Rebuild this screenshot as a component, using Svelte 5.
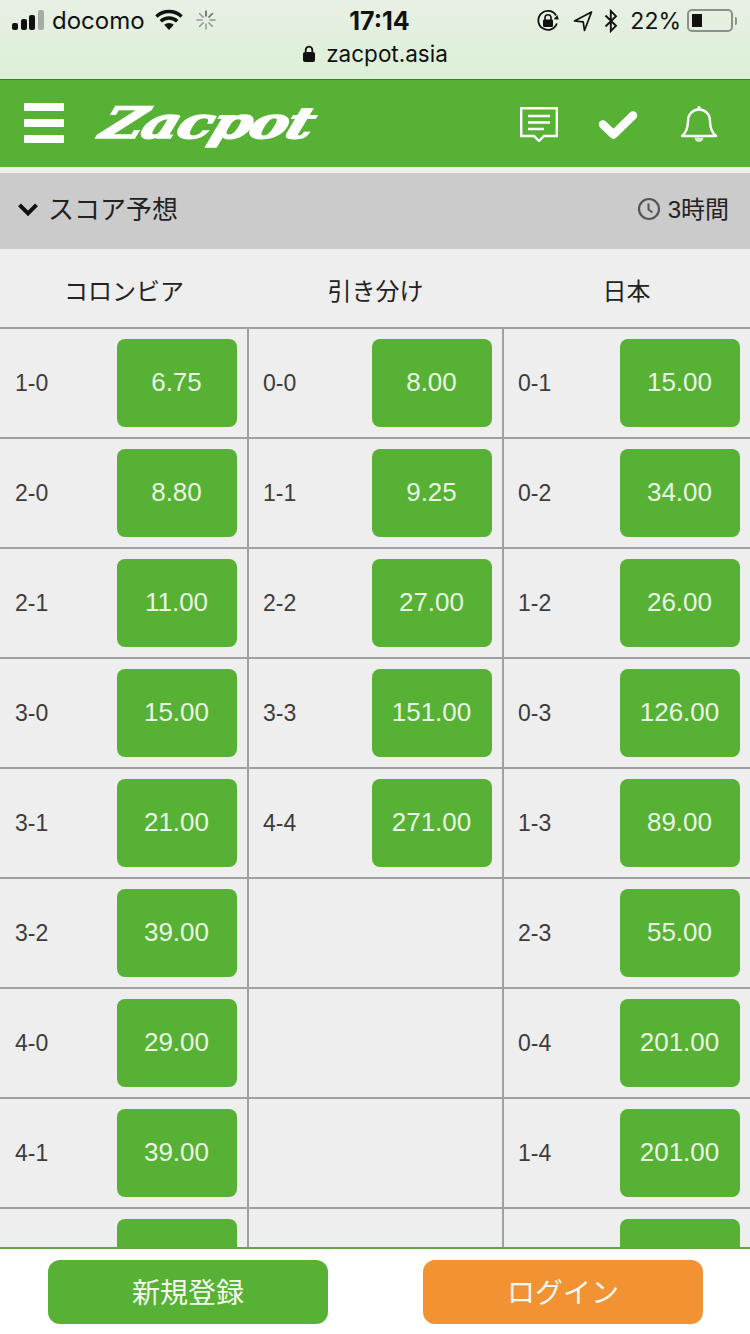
<script>
  const rows = [
    [['1-0','6.75'],['0-0','8.00'],['0-1','15.00']],
    [['2-0','8.80'],['1-1','9.25'],['0-2','34.00']],
    [['2-1','11.00'],['2-2','27.00'],['1-2','26.00']],
    [['3-0','15.00'],['3-3','151.00'],['0-3','126.00']],
    [['3-1','21.00'],['4-4','271.00'],['1-3','89.00']],
    [['3-2','39.00'],null,['2-3','55.00']],
    [['4-0','29.00'],null,['0-4','201.00']],
    [['4-1','39.00'],null,['1-4','201.00']],
    [['','' ],null,['','']]
  ];
</script>

<div class="page">
  <div class="browser">
    <div class="status">
      <div class="st-left">
        <span class="signal"><i class="b1"></i><i class="b2"></i><i class="b3"></i><i class="b4"></i></span>
        <span class="carrier">docomo</span>
        <svg class="wifi" width="30" height="22" viewBox="0 0 30 22"><path d="M15 21 L10.2 15.8 A7 7 0 0 1 19.8 15.8 Z" fill="#111"/><path d="M6.8 12.2 A12 12 0 0 1 23.2 12.2" fill="none" stroke="#111" stroke-width="3.4"/><path d="M2.4 7.4 A18.500 18.500 0 0 1 27.600 7.400" fill="none" stroke="#111" stroke-width="3.4"/></svg>
        <svg class="spin" width="20" height="20" viewBox="0 0 20 20" stroke-width="1.500" stroke-linecap="round"><g stroke="#555"><path d="M10 1v5"/><path d="M16.400 3.600l-3.500 3.500" opacity=".8"/><path d="M19 10h-5" opacity=".6"/></g><g stroke="#999"><path d="M16.400 16.400l-3.500-3.500"/><path d="M10 19v-5"/><path d="M3.600 16.400l3.500-3.500"/><path d="M1 10h5"/><path d="M3.600 3.600l3.500 3.500"/></g></svg>
      </div>
      <div class="time">17:14</div>
      <div class="st-right">
        <svg width="24" height="24" viewBox="0 0 24 24"><path d="M20.800 14.500A9.500 9.500 0 1 1 20 6.500" fill="none" stroke="#111" stroke-width="1.800"/><path d="M22.800 10.500l-5.200-.2 3.800-4.200z" fill="#111"/><rect x="7" y="10.500" width="10" height="7.500" rx="1.200" fill="#111"/><path d="M9 11V8.800a3 3 0 0 1 6 0V11" fill="none" stroke="#111" stroke-width="1.600"/></svg>
        <svg class="loc" width="20" height="22" viewBox="0 0 20 22"><path d="M18.500 2 L1.500 11 L10.200 11.800 L11.500 20.500 Z" fill="none" stroke="#111" stroke-width="1.700" stroke-linejoin="round"/></svg>
        <svg class="bt" width="16" height="24" viewBox="0 0 14 24"><path d="M1.500 6.500 L12 16.800 L6.800 22 V2 L12 7.200 L1.500 17.500" fill="none" stroke="#111" stroke-width="1.900"/></svg>
        <span class="pct">22%</span>
        <span class="battery"><span class="fill"></span></span>
        <span class="nub"></span>
      </div>
    </div>
    <div class="url">
      <svg width="14" height="18" viewBox="0 0 14 18"><rect x="1" y="7" width="12" height="10" rx="2" fill="#111"/><path d="M3.700 8V5a3.300 3.300 0 0 1 6.600 0v3" fill="none" stroke="#111" stroke-width="1.800"/></svg>
      <span>zacpot.asia</span>
    </div>
  </div>

  <header class="nav">
    <div class="burger"><i></i><i></i><i></i></div>
    <div class="logo">Zacpot</div>
    <div class="nav-icons">
      <svg width="38" height="35" viewBox="0 0 38 35"><path d="M1.200 1.200H36.800V29H24L19 34L14 29H1.200Z" fill="none" stroke="#fff" stroke-width="2.400"/><path d="M8 9H30M8 15.500H30M8 22H24" stroke="#fff" stroke-width="2.400" fill="none"/></svg>
      <svg width="40" height="30" viewBox="0 0 40 30"><path d="M5 14.500 L15.500 24.500 L35 5.500" fill="none" stroke="#fff" stroke-width="8.500" stroke-linecap="round" stroke-linejoin="round"/></svg>
      <svg width="38" height="39" viewBox="0 0 38 39"><path d="M2 31 C7 27 8 22 8 16 C8 9 13 4.500 19 4.500 C25 4.500 30 9 30 16 C30 22 31 27 36 31 Z" fill="none" stroke="#fff" stroke-width="2.400" stroke-linejoin="round"/><circle cx="19" cy="2.800" r="1.800" fill="#fff"/><path d="M14.500 32.500a4.500 4.500 0 0 0 9 0z" fill="#d8e9d2"/></svg>
    </div>
  </header>

  <div class="section">
    <div class="sec-title">
      <svg width="22" height="15" viewBox="0 0 22 15"><path d="M2.500 2.800 L11 11.300 L19.500 2.800" fill="none" stroke="#111" stroke-width="4"/></svg>
      <span>スコア予想</span>
    </div>
    <div class="sec-time">
      <svg width="24" height="24" viewBox="0 0 24 24"><circle cx="12" cy="12" r="10" fill="none" stroke="#555" stroke-width="2.200"/><path d="M11.500 6.500V12.500L15.500 15.500" fill="none" stroke="#555" stroke-width="2"/></svg>
      <span>3時間</span>
    </div>
  </div>

  <div class="teams">
    <div>コロンビア</div>
    <div>引き分け</div>
    <div>日本</div>
  </div>

  <div class="table">
    {#each rows as row}
      <div class="row">
        {#each row as cell, i}
          <div class="cell c{i}">
            {#if cell}
              <span class="score">{cell[0]}</span>
              <span class="odds">{cell[1]}</span>
            {/if}
          </div>
        {/each}
      </div>
    {/each}
  </div>

  <footer class="foot">
    <div class="btn green">新規登録</div>
    <div class="btn orange">ログイン</div>
  </footer>
</div>

<style>
  :global(body) { margin: 0; }
  .page {
    width: 750px; height: 1334px; display: flex; flex-direction: column; overflow: hidden;
    background: #eeeeee; color: #333;
    font-family: "Liberation Sans", Arial, "Noto Sans CJK JP", sans-serif;
  }
  .browser { height: 79px; flex: none; background: linear-gradient(#e8efe4, #dcf0d6); color: #111; }
  .status { height: 40px; display: grid; grid-template-columns: 1fr auto 1fr; align-items: center; padding: 1px 0 0 12px; box-sizing: border-box; }
  .st-left { display: flex; align-items: center; }
  .signal { display: flex; align-items: flex-end; gap: 2.500px; height: 20px; width: 33px; margin-top: -2px; }
  .signal i { width: 6px; background: #111; border-radius: 2px; }
  .signal .b1 { height: 7px; } .signal .b2 { height: 11px; } .signal .b3 { height: 15px; }
  .signal .b4 { height: 20px; background: #a8aca6; }
  .carrier { font-size: 24px; margin-left: 7px; font-family: Inter, "Liberation Sans", sans-serif; font-weight: 400; margin-top: -1px; }
  .wifi { margin-left: 9px; margin-top: -2px; }
  .spin { margin-left: 12px; margin-top: -2px; }
  .time { font-size: 25px; font-weight: 700; font-family: Inter, "Liberation Sans", sans-serif; margin-left: -3px; }
  .st-right { display: flex; align-items: center; justify-content: flex-end; padding-right: 13px; }
  .loc { margin-left: 13px; }
  .bt { margin-left: 10px; }
  .pct { font-size: 23px; margin-left: 11px; font-family: Inter, "Liberation Sans", sans-serif; }
  .battery { border: 2px solid #8c908a; border-radius: 5px; margin-left: 6px; padding: 3px; box-sizing: content-box; height: 13px; width: 36px; display: flex; }
  .battery .fill { width: 10px; background: #111; }
  .nub { width: 2px; height: 8px; background: #8c908a; margin-left: 2px; border-radius: 0 2px 2px 0; }
  .url { height: 39px; display: flex; align-items: center; justify-content: center; gap: 10px; font-size: 22.500px; font-family: Inter, "Liberation Sans", sans-serif; padding-bottom: 12px; box-sizing: border-box; }

  .nav { height: 88px; flex: none; box-sizing: border-box; border-top: 1px solid #3f7d2b; background: #56b135; display: flex; align-items: center; padding: 0 24px; }
  .burger { width: 40px; display: flex; flex-direction: column; gap: 8px; margin-top: -2px; }
  .burger i { height: 8px; background: #fff; display: block; border-radius: 1px; }
  .logo { margin-left: 39px; margin-top: 0; color: #fff; font-family: "DejaVu Serif", serif; font-weight: 700; font-style: italic; font-size: 43px; line-height: 1; letter-spacing: -1.500px; -webkit-text-stroke: 1.600px #fff; transform: scaleX(1.35) skewX(-14deg); transform-origin: left center; }
  .nav-icons { margin-left: auto; margin-right: 8px; margin-top: 2px; display: flex; align-items: center; gap: 40px; }
  .nav-icons svg:nth-child(2) { margin-right: 2px; }

  .section { height: 76px; flex: none; box-sizing: border-box; margin-top: 6px; background: #cbcbcb; display: flex; align-items: center; justify-content: space-between; padding: 0 21px 7px 17px; color: #222; }
  .sec-title { display: flex; align-items: center; gap: 9px; font-size: 26px; }
  .sec-title svg { margin-top: 4px; }
  .sec-time { display: flex; align-items: center; gap: 7px; font-size: 24px; }
  .sec-time svg { margin-top: 2px; }

  .teams { height: 78px; flex: none; display: grid; grid-template-columns: 248px 255px 247px; align-items: center; text-align: center; font-size: 24px; color: #222; padding-top: 2px; box-sizing: border-box; }
  .table { flex: 1; min-height: 0; overflow: hidden; }
  .row { display: grid; grid-template-columns: 249px 255px 246px; height: 110px; box-sizing: border-box; border-top: 2px solid #a0a0a0; }
  .cell { display: flex; align-items: center; justify-content: space-between; padding: 0 10px 0 14px; box-sizing: border-box; height: 108px; }
  .cell.c0, .cell.c1 { border-right: 2px solid #a0a0a0; }
  .cell.c0 { padding-left: 15px; }
  .score { font-size: 23px; color: #3c3c3c; }
  .odds { width: 120px; height: 88px; border-radius: 8px; background: #56b135; color: #eaf6e4; font-size: 26px; display: flex; align-items: center; justify-content: center; padding: 0 1px 2px 0; box-sizing: border-box; }

  .foot { height: 87px; flex: none; box-sizing: border-box; border-top: 2px solid #5fa945; background: #fff; display: flex; justify-content: space-between; padding: 11px 47px 0 48px; }
  .btn { width: 280px; height: 64px; border-radius: 12px; color: #f4f9f0; font-size: 28px; display: flex; align-items: center; justify-content: center; padding-bottom: 3px; box-sizing: border-box; }
  .green { background: #56b135; }
  .orange { background: #f29233; }
</style>
